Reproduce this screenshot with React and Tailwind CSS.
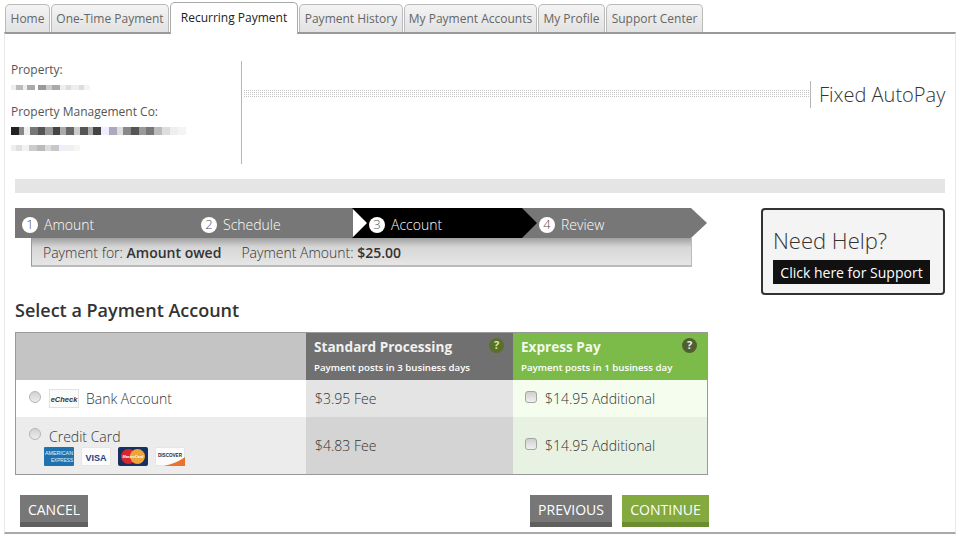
import React from "react";

const tabs = [
  { label: "Home", width: "w-[45px]" },
  { label: "One-Time Payment", width: "w-[118px]" },
  { label: "Recurring Payment", width: "w-[128px]", active: true },
  { label: "Payment History", width: "w-[104px]" },
  { label: "My Payment Accounts", width: "w-[133px]" },
  { label: "My Profile", width: "w-[67px]" },
  { label: "Support Center", width: "w-[97px]" },
];

// Stand-ins for the pixelated, redacted text in the property block
const smudgeRows = [
  ["w-[5px] bg-[#eee]", "w-[7px] bg-[#bbb]", "w-[4px] bg-[#eee]", "w-[8px] bg-[#aaa]", "w-[3px] bg-[#fff]", "w-[8px] bg-[#999]", "w-[6px] bg-[#ccc]", "w-[8px] bg-[#aaa]", "w-[6px] bg-[#eee]", "w-[5px] bg-[#ddd]", "w-[8px] bg-[#eee]", "w-[5px] bg-[#ddd]", "w-[6px] bg-[#f4f4f4]"],
  ["w-[8px] bg-[#222]", "w-[5px] bg-[#888]", "w-[6px] bg-[#eee]", "w-[8px] bg-[#777]", "w-[7px] bg-[#555]", "w-[8px] bg-[#999]", "w-[7px] bg-[#444]", "w-[6px] bg-[#aaa]", "w-[8px] bg-[#666]", "w-[6px] bg-[#ccc]", "w-[8px] bg-[#555]", "w-[5px] bg-[#aaa]", "w-[8px] bg-[#444]", "w-[8px] bg-[#eef]", "w-[8px] bg-[#aab]", "w-[6px] bg-[#ddd]", "w-[8px] bg-[#888]", "w-[8px] bg-[#555]", "w-[7px] bg-[#999]", "w-[8px] bg-[#777]", "w-[8px] bg-[#bbb]", "w-[8px] bg-[#ddd]", "w-[8px] bg-[#eee]", "w-[8px] bg-[#f4f4f4]"],
  ["w-[5px] bg-[#eee]", "w-[6px] bg-[#e0e0e0]", "w-[7px] bg-[#f2f2f2]", "w-[8px] bg-[#ccc]", "w-[8px] bg-[#bbb]", "w-[6px] bg-[#ddd]", "w-[8px] bg-[#c8c8c8]", "w-[7px] bg-[#eef]", "w-[8px] bg-[#efefef]", "w-[6px] bg-[#f6f6f6]"],
];

function Smudge({ row, className }) {
  return (
    <div className={"flex " + className}>
      {row.map((cell, i) => (
        <span key={i} className={"h-full " + cell} />
      ))}
    </div>
  );
}

function Tab({ label, width, active }) {
  if (active) {
    return (
      <div className={"relative z-10 -mt-[2px] -mb-[2px] h-[32px] bg-white border border-b-0 border-[#aaa] rounded-t-[5px] flex items-center justify-center text-[12px] text-[#222] pb-[2px] " + width}>
        {label}
      </div>
    );
  }
  return (
    <div className={"h-[28px] bg-gradient-to-b from-[#f4f4f4] to-[#e2e2e2] border border-b-0 border-[#bbb] rounded-t-[5px] flex items-center justify-center text-[12px] text-[#666] " + width}>
      {label}
    </div>
  );
}

function StepLabel({ n, label }) {
  return (
    <div className="flex items-center text-[14px] font-light text-white">
      <span className="w-[16px] h-[16px] rounded-full bg-white text-[#555] text-[13px] flex items-center justify-center mr-[6px] shrink-0">{n}</span>
      {label}
    </div>
  );
}

function Help({ className }) {
  return (
    <span className={"absolute top-[5px] w-[15px] h-[15px] rounded-full flex items-center justify-center text-[11px] font-bold " + className}>?</span>
  );
}

function ECheck() {
  return (
    <svg width="30" height="19" viewBox="0 0 30 19" className="shrink-0">
      <rect x="0.5" y="0.5" width="29" height="18" fill="#fbfbfb" stroke="#e2e2e2" />
      <text x="15" y="12.5" textAnchor="middle" fontSize="7.5" fontWeight="700" fontStyle="italic" fill="#333" fontFamily="Liberation Sans, sans-serif">eCheck</text>
    </svg>
  );
}

function Amex() {
  return (
    <svg width="30" height="19" viewBox="0 0 30 19">
      <rect width="30" height="19" rx="1" fill="#1f72ad" />
      <text x="15" y="8" textAnchor="middle" fontSize="5" fill="#e6f2fa" fontFamily="Liberation Sans, sans-serif" textLength="28" lengthAdjust="spacingAndGlyphs">AMERICAN</text>
      <text x="29" y="15" textAnchor="end" fontSize="5" fill="#e6f2fa" fontFamily="Liberation Sans, sans-serif" textLength="22" lengthAdjust="spacingAndGlyphs">EXPRESS</text>
    </svg>
  );
}

function Visa() {
  return (
    <svg width="30" height="19" viewBox="0 0 30 19">
      <rect x="0.5" y="0.5" width="29" height="18" fill="#fcfcfc" stroke="#e6e6e6" />
      <text x="15" y="13.5" textAnchor="middle" fontSize="9" fontWeight="700" fill="#24407f" fontFamily="Liberation Sans, sans-serif">VISA</text>
    </svg>
  );
}

function Mastercard() {
  return (
    <svg width="30" height="19" viewBox="0 0 30 19">
      <rect width="30" height="19" rx="2" fill="#17305f" />
      <circle cx="10.5" cy="9.5" r="7.5" fill="#d9262e" />
      <circle cx="19.5" cy="9.5" r="7.5" fill="#eda53a" />
      <text x="15" y="11" textAnchor="middle" fontSize="3.8" fontWeight="700" fontStyle="italic" fill="#fff" fontFamily="Liberation Sans, sans-serif">MasterCard</text>
    </svg>
  );
}

function Discover() {
  return (
    <svg width="30" height="19" viewBox="0 0 30 19">
      <rect x="0.5" y="0.5" width="29" height="18" fill="#fcfcfc" stroke="#e6e6e6" />
      <path d="M9 19 C18 17 25 14 30 10 L30 19 Z" fill="#e8732c" />
      <text x="15" y="10" textAnchor="middle" fontSize="4.6" fontWeight="700" fill="#2a2a2a" fontFamily="Liberation Sans, sans-serif">DISCOVER</text>
    </svg>
  );
}

function Radio() {
  return (
    <input type="radio" name="account" className="appearance-none w-[12px] h-[12px] rounded-full border border-[#b5b5b5] bg-gradient-to-b from-[#d2d2d2] to-[#ededed] shrink-0 m-0" />
  );
}

function Check() {
  return (
    <input type="checkbox" className="appearance-none w-[12px] h-[12px] rounded-[3px] border border-[#a5a5a5] bg-gradient-to-b from-[#cfcfcf] to-[#f0f0f0] shrink-0 m-0 -mt-[3px]" />
  );
}

function Button({ children, className }) {
  return (
    <button className={"h-[32px] border-b-[5px] flex items-center justify-center text-[14px] text-white pt-[1px] " + className}>
      {children}
    </button>
  );
}

export default function App() {
  return (
    <div className="w-[961px] h-[539px] bg-white overflow-hidden pt-[4px] pl-[4px] font-['Open_Sans',sans-serif] text-[#444]">
      {/* Tabs */}
      <div className="flex items-start gap-[1px] pl-[1px] h-[28px]">
        {tabs.map((tab) => (
          <Tab key={tab.label} {...tab} />
        ))}
      </div>

      <div className="w-[952px] h-[502px] border-t-2 border-t-[#999] border-b-2 border-b-[#aaa] border-x border-x-[#e8e8e8]">
        {/* Property header */}
        <div className="flex mt-[27px] h-[103px]">
          <div className="w-[237px] h-full border-r border-[#b5b5b5] pl-[6px] text-[12px] text-[#555]">
            <div className="leading-[16px] pt-[1px]">Property:</div>
            <Smudge row={smudgeRows[0]} className="mt-[7px] h-[5px]" />
            <div className="leading-[16px] mt-[14px]">Property Management Co:</div>
            <Smudge row={smudgeRows[1]} className="mt-[7px] h-[8px]" />
            <Smudge row={smugeSafe()} className="mt-[10px] h-[6px]" />
          </div>
          <div className="flex-1 flex items-start pt-[20px] pl-[1px]">
            <div className="w-[567px] h-[7px] mt-[9px] bg-[repeating-linear-gradient(to_right,#fff_0,#fff_1px,transparent_1px,transparent_2px),repeating-linear-gradient(to_bottom,#c4c4c4_0,#c4c4c4_1px,#fff_1px,#fff_2px)]" />
            <div className="h-[27px] border-l border-[#b5b5b5] pl-[8px] text-[20px] font-light text-[#333] leading-[27px] whitespace-nowrap">Fixed AutoPay</div>
          </div>
        </div>

        {/* Grey bar */}
        <div className="ml-[10px] mt-[15px] w-[930px] h-[14px] bg-[#e5e5e5]" />

        <div className="flex mt-[15px] ml-[10px]">
          <div className="w-[692px]">
            {/* Steps */}
            <div className="relative flex h-[30px]">
              <div className="w-[338px] h-full bg-[#777] flex items-center pl-[7px] pt-[3px]">
                <div className="w-[179px]"><StepLabel n="1" label="Amount" /></div>
                <StepLabel n="2" label="Schedule" />
              </div>
              <div className="relative z-10 -ml-[1px] w-[185px] h-full bg-black flex items-center pl-[17px] pt-[3px] [clip-path:polygon(0_0,170px_0,100%_50%,170px_100%,0_100%,15px_50%)]">
                <StepLabel n="3" label="Account" />
              </div>
              <div className="-ml-[15px] flex-1 h-full bg-[#777] flex items-center pl-[17px] pt-[3px] [clip-path:polygon(0_0,169px_0,100%_50%,169px_100%,0_100%)]">
                <StepLabel n="4" label="Review" />
              </div>
            </div>
            {/* Summary */}
            <div className="ml-[16px] w-[661px] h-[29px] border-b-2 border-x border-[#bbb] border-l-[#999] bg-[linear-gradient(to_bottom,#a0a0a0_0,#d6d6d6_9px,#e6e6e6_100%)] flex items-center pl-[11px] pt-[1px] text-[14px] font-light text-[#333]">
              <span>Payment for: <b className="font-semibold text-[#333]">Amount owed</b></span>
              <span className="ml-[20px]">Payment Amount: <b className="font-semibold text-[#333]">$25.00</b></span>
            </div>
          </div>

          {/* Need help */}
          <div className="ml-[54px] w-[184px] h-[87px] border-2 border-[#333] rounded-[4px] bg-[#f4f4f4] pl-[10px] pt-[16px]">
            <div className="text-[22px] font-light text-[#333] leading-[28px]">Need Help?</div>
            <div className="mt-[6px] w-[157px] h-[24px] bg-[#111] text-white text-[14px] font-medium flex items-center justify-center whitespace-nowrap">Click here for Support</div>
          </div>
        </div>

        <h2 className="ml-[10px] mt-[3px] text-[18px] font-semibold text-[#333] leading-[24px]">Select a Payment Account</h2>

        {/* Account table */}
        <div className="ml-[10px] mt-[10px] w-[693px] border border-[#999] grid grid-cols-[290px_207px_194px] grid-rows-[47px_37px_57px] text-[#333]">
          <div className="bg-[#c4c4c4]" />
          <div className="relative bg-[#707070] pl-[8px] pt-[4px] text-white">
            <div className="text-[13.6px] font-bold leading-[20px] text-[#f0f0f0]">Standard Processing</div>
            <div className="text-[9.7px] font-semibold leading-[14px] mt-[4px]">Payment posts in 3 business days</div>
            <Help className="right-[9px] bg-[#5a7028] text-[#dbe6a8]" />
          </div>
          <div className="relative bg-[#7cbb4a] pl-[8px] pt-[4px] text-white">
            <div className="text-[13.6px] font-bold leading-[20px] text-[#f2f8ea]">Express Pay</div>
            <div className="text-[9.7px] font-semibold leading-[14px] mt-[4px]">Payment posts in 1 business day</div>
            <Help className="right-[10px] bg-[#4f5f30] text-[#f0f0f0]" />
          </div>

          <div className="bg-white flex items-center pl-[13px] text-[14px] font-light">
            <span className="-mt-[4px] flex"><Radio /></span>
            <span className="ml-[8px]"><ECheck /></span>
            <span className="ml-[7px]">Bank Account</span>
          </div>
          <div className="bg-[#e4e4e4] flex items-center pl-[9px] text-[14px] font-light">$3.95 Fee</div>
          <div className="bg-[#f4fdee] flex items-center pl-[12px] text-[14px] font-light">
            <Check />
            <span className="ml-[8px]">$14.95 Additional</span>
          </div>

          <div className="bg-[#ececec] pl-[13px] pt-[11px] text-[14px] font-light">
            <div className="flex items-start">
              <Radio />
              <span className="ml-[8px] leading-[18px]">Credit Card</span>
            </div>
            <div className="flex gap-[7px] ml-[15px] mt-[1px] [&>svg]:block">
              <Amex />
              <Visa />
              <Mastercard />
              <Discover />
            </div>
          </div>
          <div className="bg-[#d4d4d4] flex items-center pl-[9px] text-[14px] font-light">$4.83 Fee</div>
          <div className="bg-[#e8f2e3] flex items-center pl-[12px] text-[14px] font-light">
            <Check />
            <span className="ml-[8px]">$14.95 Additional</span>
          </div>
        </div>

        {/* Actions */}
        <div className="flex ml-[15px] w-[689px] mt-[20px]">
          <Button className="w-[68px] bg-[#777] border-[#5f5f5f]">CANCEL</Button>
          <Button className="w-[82px] ml-auto bg-[#777] border-[#5f5f5f]">PREVIOUS</Button>
          <Button className="w-[87px] ml-[10px] bg-[#83a93f] border-[#6b8c30]">CONTINUE</Button>
        </div>
      </div>
    </div>
  );
}

function smugeSafe() {
  return smudgeRows[2];
}
